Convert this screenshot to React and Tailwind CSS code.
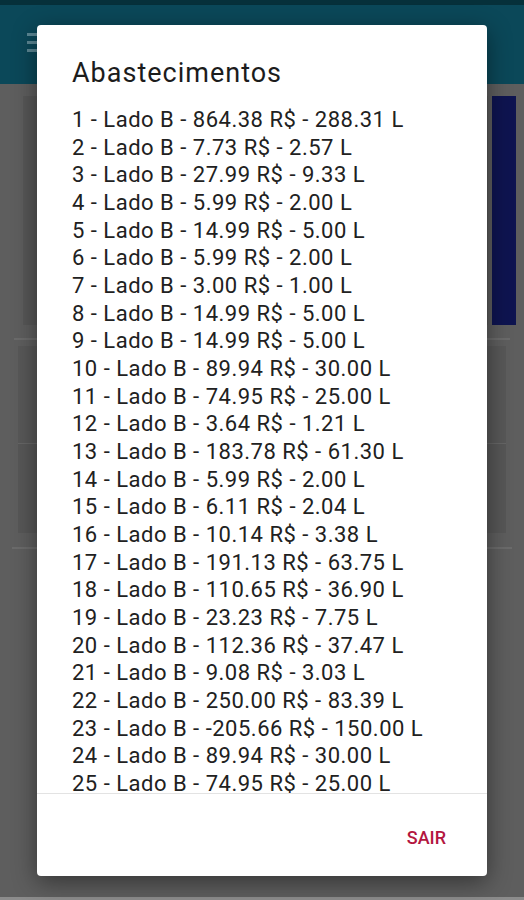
import React from 'react';

const abastecimentos = [
  ['864.38', '288.31'],
  ['7.73', '2.57'],
  ['27.99', '9.33'],
  ['5.99', '2.00'],
  ['14.99', '5.00'],
  ['5.99', '2.00'],
  ['3.00', '1.00'],
  ['14.99', '5.00'],
  ['14.99', '5.00'],
  ['89.94', '30.00'],
  ['74.95', '25.00'],
  ['3.64', '1.21'],
  ['183.78', '61.30'],
  ['5.99', '2.00'],
  ['6.11', '2.04'],
  ['10.14', '3.38'],
  ['191.13', '63.75'],
  ['110.65', '36.90'],
  ['23.23', '7.75'],
  ['112.36', '37.47'],
  ['9.08', '3.03'],
  ['250.00', '83.39'],
  ['-205.66', '150.00'],
  ['89.94', '30.00'],
  ['74.95', '25.00'],
];

function App() {
  return (
    <div className="relative w-[524px] h-[900px] overflow-hidden bg-[#5e5e5e] font-['Roboto',sans-serif]">
      {/* Dimmed screen behind the dialog */}
      <div className="flex flex-col h-full">
        <div className="h-[5px] bg-[#06303a]" />
        <div className="h-[79px] bg-[#0b4859] flex items-center pl-[27px]">
          <div className="flex flex-col gap-[5px] w-[10px] -mt-[4px]">
            <span className="block h-[3px] bg-[#5b8794]" />
            <span className="block h-[3px] bg-[#5b8794]" />
            <span className="block h-[3px] bg-[#5b8794]" />
          </div>
        </div>

        <div className="flex-1 flex flex-col">
          <div className="mt-[12px] mx-[8px] flex gap-[4px] h-[229px]">
            <div className="flex-1 bg-[#575757] ml-[15px]" />
            <div className="w-[24px] bg-[#0e1450]" />
          </div>
          <div className="mt-[13px] mx-[14px] h-[2px] bg-[#6b6b6b]" />
          <div className="mt-[6px] mx-[18px] flex flex-col">
            <div className="h-[98px] bg-[#585858] border-b border-[#666]" />
            <div className="h-[89px] bg-[#575757]" />
          </div>
          <div className="mt-[14px] mx-[12px] h-[2px] bg-[#6b6b6b]" />
          <div className="flex-1" />
          <div className="h-[3px] bg-[#8c8c8c]" />
        </div>
      </div>

      {/* Dialog */}
      <div className="absolute left-[37px] top-[25px] w-[450px] h-[851px] bg-white rounded-[4px] shadow-[0_6px_24px_rgba(0,0,0,0.45)] flex flex-col">
        <h2 className="pt-[32px] px-[35px] text-[27px] leading-[32px] tracking-[1px] text-[#1c1c1c] font-normal">
          Abastecimentos
        </h2>

        <div className="mt-[17px] flex-1 overflow-y-auto [scrollbar-width:none]">
          <ul className="px-[35px] text-[22px] leading-[27.67px] tracking-[0.5px] text-[#212121]">
            {abastecimentos.map(([valor, litros], i) => (
              <li key={i} className="whitespace-nowrap">
                {i + 1} - Lado B - {valor} R$ - {litros} L
              </li>
            ))}
          </ul>
        </div>

        <div className="h-[1px] bg-[#e3e3e3]" />

        <div className="h-[82px] flex items-center justify-end pr-[41px] pt-[4px]">
          <button className="text-[18px] font-medium text-[#b3163f]">
            SAIR
          </button>
        </div>
      </div>
    </div>
  );
}

export default App;
